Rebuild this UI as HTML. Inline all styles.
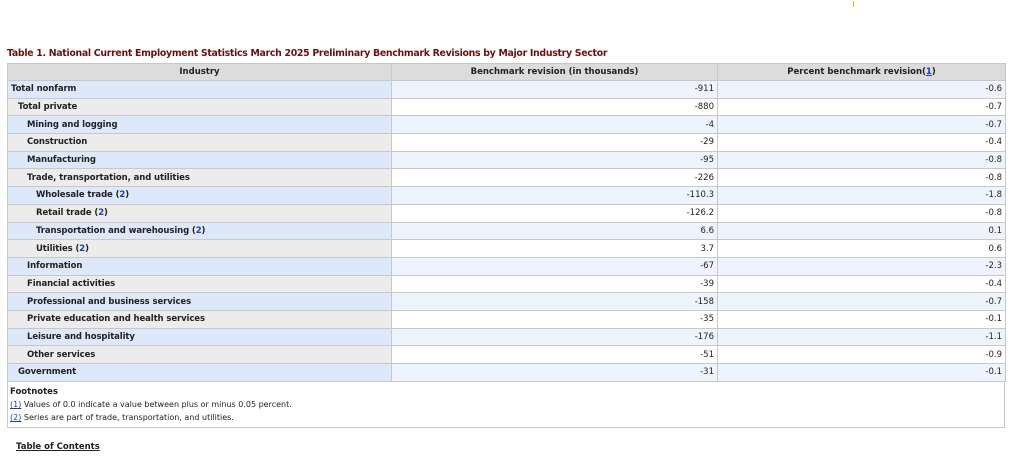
<!DOCTYPE html>
<html><head><style>
body{margin:0;background:#fff;font-family:"DejaVu Sans","Liberation Sans",sans-serif;font-size:8.5px;color:#222;width:1024px;height:457px;overflow:hidden;position:relative}
.t{position:absolute;left:7px;top:48px;font-size:9.4px;font-weight:bold;color:#6b0f0f;letter-spacing:-0.3px}
table{position:absolute;left:7px;top:63px;width:998px;border-collapse:collapse;table-layout:fixed}
td,th{border:1px solid #c8c8c8;height:16.7px;padding:0 3px;white-space:nowrap;overflow:hidden}
th{background:#dcdcdc;font-weight:bold;height:16px}
td.n{font-weight:bold;letter-spacing:-0.1px}
tr.o td.n{background:#dde9fb}
tr.e td.n{background:#ececec}
tr.o td.v{background:#eef4fd}
td.v{text-align:right}
.l1{padding-left:10px}.l2{padding-left:19px}.l3{padding-left:28px}
a{color:#1a3fa6}
.f{position:absolute;left:7px;top:381px;width:998px;height:47px;border:1px solid #c8c8c8;border-top:none;box-sizing:border-box;padding:6px 2px 0;font-size:8px}
.f b{display:block;height:13px;font-size:8.5px}
.f div{height:13px}
.f a{text-decoration:underline}
.toc{position:absolute;left:16px;top:442px;font-weight:bold;text-decoration:underline}
</style></head><body>
<div style="position:absolute;left:853px;top:1px;width:1px;height:6px;background:#e6c300"></div>
<div class="t">Table 1. National Current Employment Statistics March 2025 Preliminary Benchmark Revisions by Major Industry Sector</div>
<table>
<colgroup><col style="width:384px"><col style="width:326px"><col style="width:288px"></colgroup>
<tr><th>Industry</th><th>Benchmark revision (in thousands)</th><th>Percent benchmark revision(<a style="text-decoration:underline">1</a>)</th></tr>
<tr class="o"><td class="n">Total nonfarm</td><td class="v">-911</td><td class="v">-0.6</td></tr>
<tr class="e"><td class="n l1">Total private</td><td class="v">-880</td><td class="v">-0.7</td></tr>
<tr class="o"><td class="n l2">Mining and logging</td><td class="v">-4</td><td class="v">-0.7</td></tr>
<tr class="e"><td class="n l2">Construction</td><td class="v">-29</td><td class="v">-0.4</td></tr>
<tr class="o"><td class="n l2">Manufacturing</td><td class="v">-95</td><td class="v">-0.8</td></tr>
<tr class="e"><td class="n l2">Trade, transportation, and utilities</td><td class="v">-226</td><td class="v">-0.8</td></tr>
<tr class="o"><td class="n l3">Wholesale trade (<a>2</a>)</td><td class="v">-110.3</td><td class="v">-1.8</td></tr>
<tr class="e"><td class="n l3">Retail trade (<a>2</a>)</td><td class="v">-126.2</td><td class="v">-0.8</td></tr>
<tr class="o"><td class="n l3">Transportation and warehousing (<a>2</a>)</td><td class="v">6.6</td><td class="v">0.1</td></tr>
<tr class="e"><td class="n l3">Utilities (<a>2</a>)</td><td class="v">3.7</td><td class="v">0.6</td></tr>
<tr class="o"><td class="n l2">Information</td><td class="v">-67</td><td class="v">-2.3</td></tr>
<tr class="e"><td class="n l2">Financial activities</td><td class="v">-39</td><td class="v">-0.4</td></tr>
<tr class="o"><td class="n l2">Professional and business services</td><td class="v">-158</td><td class="v">-0.7</td></tr>
<tr class="e"><td class="n l2">Private education and health services</td><td class="v">-35</td><td class="v">-0.1</td></tr>
<tr class="o"><td class="n l2">Leisure and hospitality</td><td class="v">-176</td><td class="v">-1.1</td></tr>
<tr class="e"><td class="n l2">Other services</td><td class="v">-51</td><td class="v">-0.9</td></tr>
<tr class="o"><td class="n l1">Government</td><td class="v">-31</td><td class="v">-0.1</td></tr>
</table>
<div class="f"><b>Footnotes</b><div><a>(1)</a> Values of 0.0 indicate a value between plus or minus 0.05 percent.</div><div><a>(2)</a> Series are part of trade, transportation, and utilities.</div></div>
<div class="toc">Table of Contents</div>
</body></html>
